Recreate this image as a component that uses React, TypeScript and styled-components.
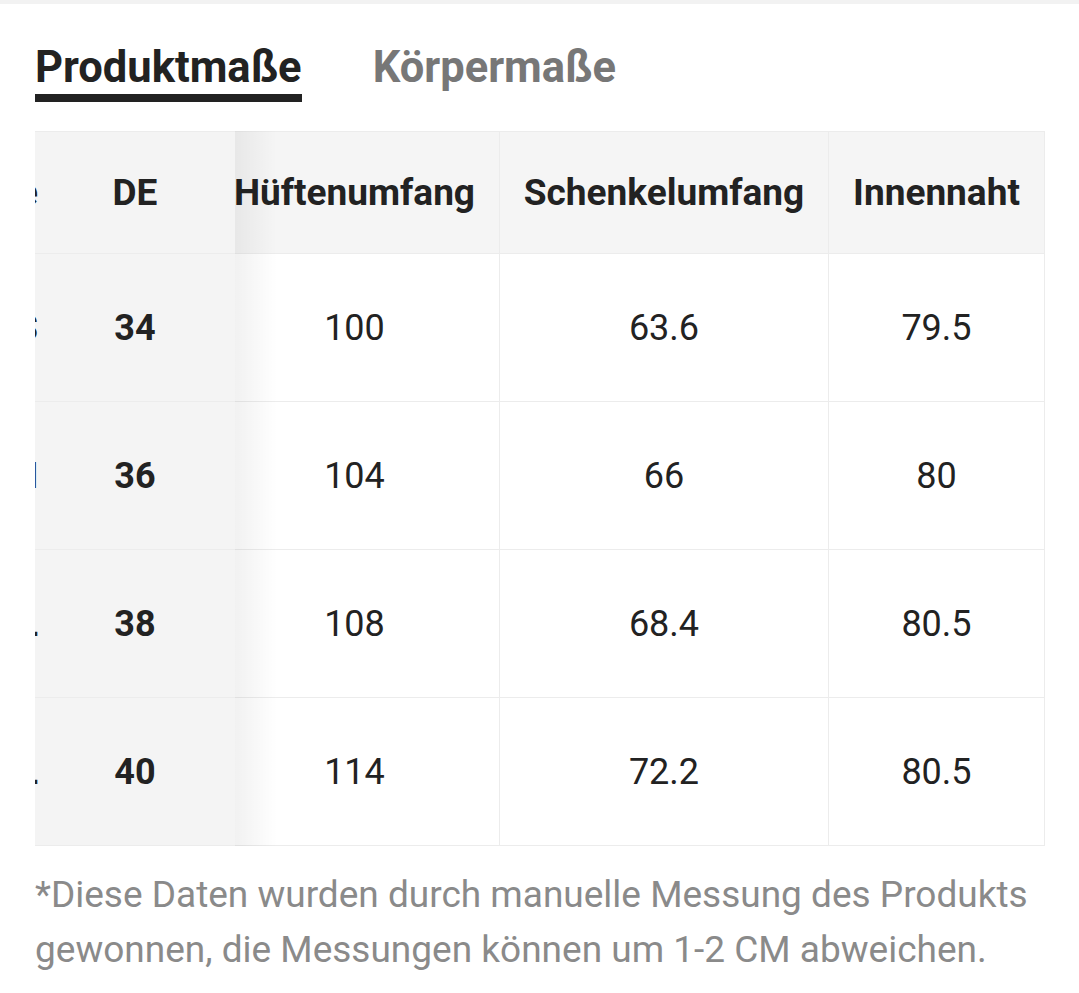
import React from "react";
import { styled, createGlobalStyle } from "styled-components";

type Row = { size: string; hip: string; thigh: string; inseam: string; hidden: string };

const rows: Row[] = [
  { size: "34", hip: "100", thigh: "63.6", inseam: "79.5", hidden: "S" },
  { size: "36", hip: "104", thigh: "66", inseam: "80", hidden: "M" },
  { size: "38", hip: "108", thigh: "68.4", inseam: "80.5", hidden: "L" },
  { size: "40", hip: "114", thigh: "72.2", inseam: "80.5", hidden: "XL" },
];

export default function App() {
  return (
    <>
      <GlobalStyle />
      <Page>
        <TopStrip />
        <Content>
          <Tabs>
            <Tab $active>Produktmaße</Tab>
            <Tab>Körpermaße</Tab>
          </Tabs>

          <Table>
            <HeaderRow>
              <StickyCell $header>
                <Sliver aria-hidden>Größe</Sliver>
                DE
              </StickyCell>
              <Cell $header $shift>Hüftenumfang</Cell>
              <Cell $header>Schenkelumfang</Cell>
              <Cell $header>Innennaht</Cell>
            </HeaderRow>
            {rows.map((row) => (
              <BodyRow key={row.size}>
                <StickyCell>
                  <Sliver aria-hidden>{row.hidden}</Sliver>
                  {row.size}
                </StickyCell>
                <Cell $shift>{row.hip}</Cell>
                <Cell>{row.thigh}</Cell>
                <Cell>{row.inseam}</Cell>
              </BodyRow>
            ))}
          </Table>

          <Note>
            *Diese Daten wurden durch manuelle Messung des Produkts gewonnen, die
            Messungen können um 1-2 CM abweichen.
          </Note>
        </Content>
      </Page>
    </>
  );
}

const GlobalStyle = createGlobalStyle`
  html, body {
    margin: 0;
    padding: 0;
    background: #fff;
  }
  body {
    font-family: Roboto, "Noto Sans", "Liberation Sans", sans-serif;
    color: #222;
  }
`;

const Page = styled.div`
  width: 1079px;
  min-height: 993px;
  background: #fff;
`;

const TopStrip = styled.div`
  height: 4px;
  background: #f2f2f2;
`;

const Content = styled.div`
  padding: 0 34px 0 35px;
`;

const Tabs = styled.div`
  display: flex;
  align-items: flex-start;
  gap: 71px;
  margin-top: 39px;
`;

const Tab = styled.div<{ $active?: boolean }>`
  font-size: 43.5px;
  line-height: 50px;
  font-weight: 700;
  padding-bottom: 1px;
  color: ${({ $active }) => ($active ? "#222" : "#777")};
  border-bottom: 8px solid ${({ $active }) => ($active ? "#222" : "transparent")};
`;

const Table = styled.div`
  margin-top: 29px;
  width: 1010px;
  border-top: 1px solid #ececec;
`;

const gridColumns = "200px 265px 329px 216px";

const HeaderRow = styled.div`
  display: grid;
  grid-template-columns: ${gridColumns};
  height: 121px;
  background: #f5f5f5;
  border-bottom: 1px solid #ececec;
`;

const BodyRow = styled.div`
  display: grid;
  grid-template-columns: ${gridColumns};
  height: 147px;
  border-bottom: 1px solid #ececec;
`;

const StickyCell = styled.div<{ $header?: boolean }>`
  position: relative;
  display: flex;
  align-items: center;
  justify-content: center;
  background: #f4f4f4;
  font-size: ${({ $header }) => ($header ? "37px" : "36px")};
  font-weight: 700;
  color: #222;

  &::after {
    content: "";
    position: absolute;
    top: ${({ $header }) => ($header ? "-1px" : "0")};
    bottom: -1px;
    left: 100%;
    width: 42px;
    background: linear-gradient(to right, rgba(0, 0, 0, 0.055), rgba(0, 0, 0, 0));
    pointer-events: none;
    z-index: 1;
  }
`;

const Sliver = styled.span`
  position: absolute;
  left: 0;
  top: 0;
  bottom: 0;
  width: 3px;
  overflow: hidden;
  display: flex;
  align-items: center;
  justify-content: flex-end;
  font-size: 36px;
  font-weight: 700;
  white-space: nowrap;
  color: #222;
`;

const Cell = styled.div<{ $header?: boolean; $shift?: boolean }>`
  display: flex;
  align-items: center;
  justify-content: center;
  padding-right: ${({ $shift }) => ($shift ? "25px" : "0")};
  white-space: nowrap;
  font-size: ${({ $header }) => ($header ? "37px" : "36px")};
  font-weight: ${({ $header }) => ($header ? 700 : 400)};
  color: #222;
  border-right: 1px solid #ececec;
`;

const Note = styled.p`
  margin: 21px 0 0;
  font-size: 37px;
  line-height: 55px;
  color: #8a8a8a;
  width: 1010px;
`;
